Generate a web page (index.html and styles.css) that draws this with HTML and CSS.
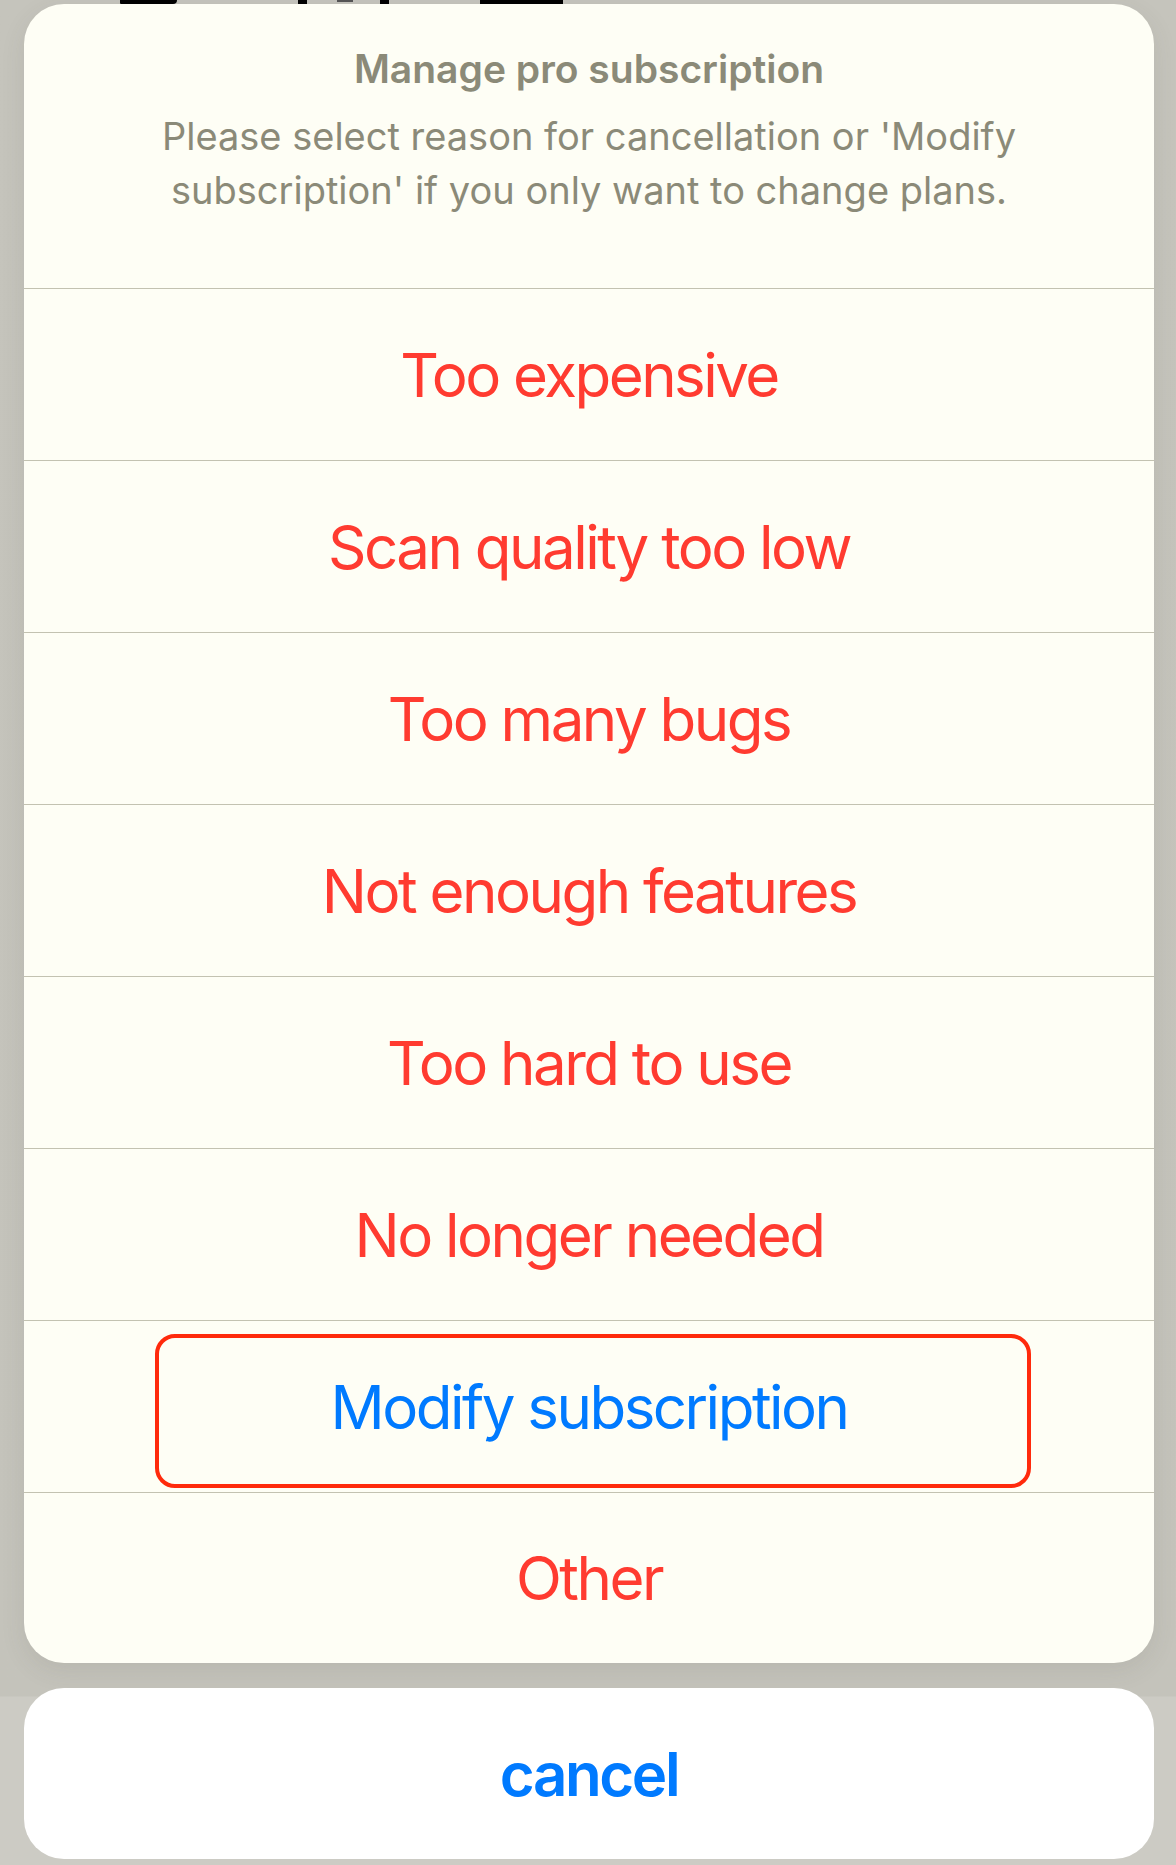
FILE: index.html
```html
<!DOCTYPE html>
<html lang="en">
<head>
<meta charset="utf-8">
<title>Manage pro subscription</title>
<link rel="stylesheet" href="styles.css">
</head>
<body>
<div class="peek" aria-hidden="true">
  <span class="bit b1"></span>
  <span class="bit b2"></span>
  <span class="bit b3"></span>
  <span class="bit b4"></span>
  <span class="bit b5"></span>
</div>
<div class="sheet">
  <div class="card">
    <div class="header">
      <div class="title">Manage pro subscription</div>
      <div class="message">Please select reason for cancellation or 'Modify<br>subscription' if you only want to change plans.</div>
    </div>
    <div class="row destructive">Too expensive</div>
    <div class="row destructive">Scan quality too low</div>
    <div class="row destructive">Too many bugs</div>
    <div class="row destructive">Not enough features</div>
    <div class="row destructive">Too hard to use</div>
    <div class="row destructive">No longer needed</div>
    <div class="row default">Modify subscription<span class="highlight"></span></div>
    <div class="row destructive">Other</div>
  </div>
  <div class="cancel">cancel</div>
</div>
</body>
</html>
```
FILE: styles.css
```css
html, body {
  margin: 0;
  padding: 0;
}
body {
  width: 1176px;
  height: 1865px;
  overflow: hidden;
  position: relative;
  background: linear-gradient(to bottom, #c5c4bc 0, #c4c3bb 1696px, #cccbc4 1697px, #cccbc4 100%);
  font-family: Inter, "Noto Sans", Roboto, sans-serif;
  -webkit-font-smoothing: antialiased;
}
.peek {
  position: absolute;
  left: 0;
  top: 0;
  width: 1176px;
  height: 6px;
}
.bit {
  position: absolute;
  top: 0;
  height: 4px;
  background: #000;
}
.b1 { left: 120px; width: 57px; border-radius: 0 0 30px 8px; }
.b2 { left: 298px; width: 9px; }
.b3 { left: 337px; width: 16px; height: 2px; background: #555; }
.b4 { left: 380px; width: 9px; }
.b5 { left: 480px; width: 83px; }

.sheet {
  position: relative;
  padding: 4px 22px 0 24px;
  display: flex;
  flex-direction: column;
  gap: 25px;
}
.card {
  background: #fefef5;
  border-radius: 40px;
  overflow: hidden;
  box-shadow: 0 8px 24px rgba(80, 78, 66, 0.10);
  display: flex;
  flex-direction: column;
}
.header {
  height: 284px;
  box-sizing: border-box;
  padding-top: 40px;
  text-align: center;
  color: #8b8a78;
}
.title {
  font-size: 39px;
  line-height: 50px;
  font-weight: 600;
}
.message {
  margin-top: 15px;
  font-size: 38px;
  line-height: 54px;
  font-weight: 400;
}
.row {
  position: relative;
  height: 172px;
  box-sizing: border-box;
  border-top: 1px solid #c3c2b1;
  display: flex;
  align-items: center;
  justify-content: center;
  font-size: 60px;
  line-height: 60px;
  font-weight: 400;
  letter-spacing: -2.5px;
}
.row:last-child {
  height: 171px;
}
.destructive {
  color: #ff3b30;
}
.default {
  color: #007aff;
}
.highlight {
  position: absolute;
  left: 131px;
  right: 123px;
  top: 13px;
  bottom: 4px;
  border: 4.5px solid #ff2a0c;
  border-radius: 20px;
}
.cancel {
  height: 171px;
  background: #ffffff;
  border-radius: 40px;
  display: flex;
  align-items: center;
  justify-content: center;
  color: #007aff;
  font-size: 60px;
  line-height: 60px;
  font-weight: 600;
  letter-spacing: -2.4px;
}
```
